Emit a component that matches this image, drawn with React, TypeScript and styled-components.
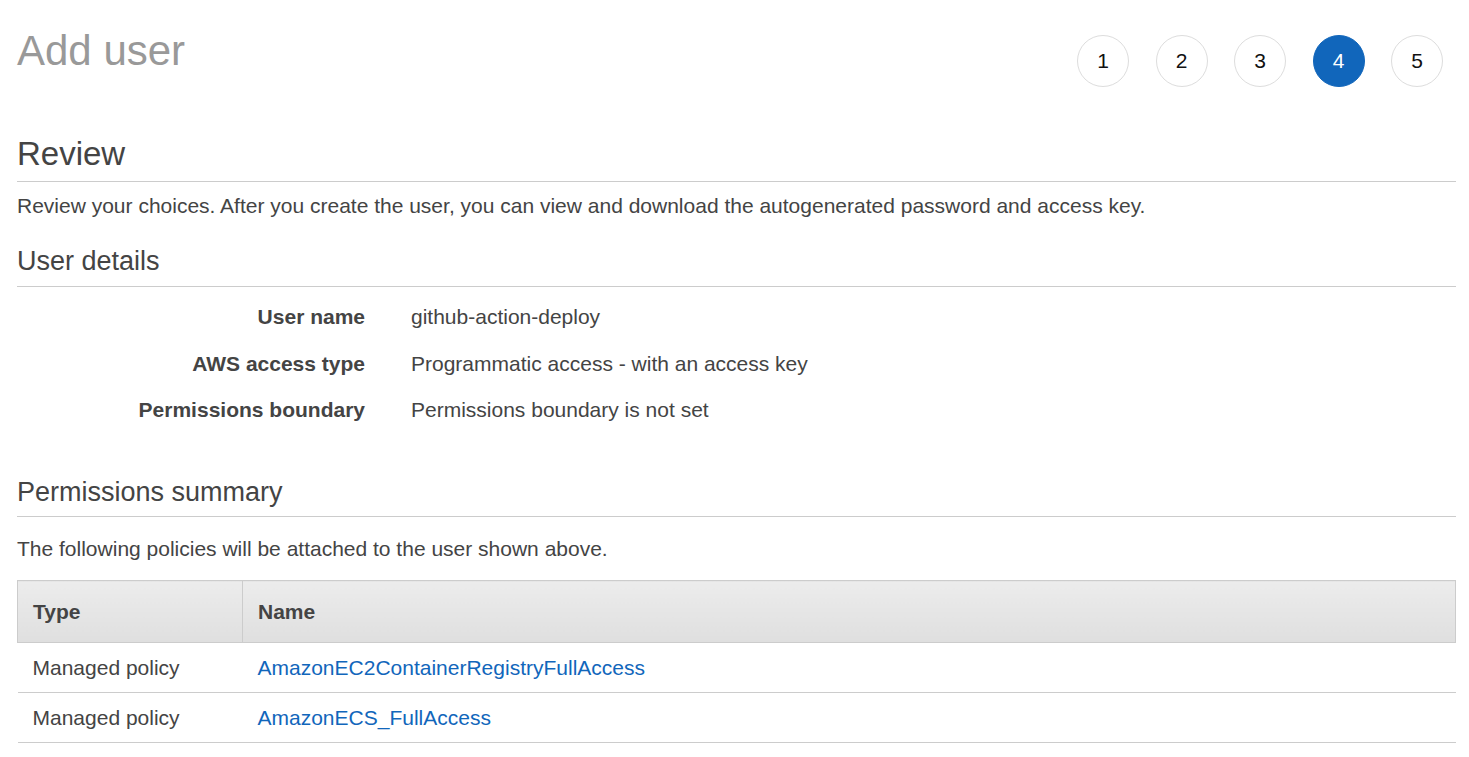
import React from "react";
import styled, { createGlobalStyle } from "styled-components";

const GlobalStyle = createGlobalStyle`
  html, body {
    margin: 0;
    padding: 0;
    background: #ffffff;
  }
  body {
    font-family: "Liberation Sans", Arial, sans-serif;
    color: #444444;
  }
  * { box-sizing: border-box; }
`;

const Page = styled.div`
  padding: 0 13px 0 17px;
`;

const Header = styled.header`
  display: flex;
  justify-content: space-between;
  align-items: flex-start;
`;

const Title = styled.h1`
  margin: 30px 0 0 0;
  font-size: 42px;
  line-height: 42px;
  font-weight: 400;
  color: #999999;
`;

const Steps = styled.ol`
  display: flex;
  gap: 26.5px;
  list-style: none;
  margin: 35px 13px 0 0;
  padding: 0;
`;

const Step = styled.li<{ $active?: boolean }>`
  width: 52px;
  height: 52px;
  border-radius: 50%;
  display: flex;
  align-items: center;
  justify-content: center;
  font-size: 21px;
  color: ${(p) => (p.$active ? "#ffffff" : "#111111")};
  background: ${(p) => (p.$active ? "#1166bb" : "#ffffff")};
  border: 1px solid ${(p) => (p.$active ? "#1166bb" : "#dddddd")};
`;

const SectionTitle = styled.h2<{ $size: number; $top: number; $pad: number }>`
  margin: ${(p) => p.$top}px 0 0 0;
  padding-bottom: ${(p) => p.$pad}px;
  font-size: ${(p) => p.$size}px;
  line-height: ${(p) => Math.round(p.$size * 1.22)}px;
  font-weight: 400;
  color: #444444;
  border-bottom: 1px solid #cccccc;
`;

const Text = styled.p<{ $top: number }>`
  margin: ${(p) => p.$top}px 0 0 0;
  font-size: 21px;
  line-height: 30px;
  color: #444444;
`;

const Details = styled.dl`
  display: grid;
  grid-template-columns: 348px 1fr;
  column-gap: 46px;
  row-gap: 16.5px;
  margin: 15px 0 0 0;
  font-size: 21px;
  line-height: 30px;
`;

const Label = styled.dt`
  text-align: right;
  font-weight: 700;
  color: #444444;
`;

const Value = styled.dd`
  margin: 0;
  color: #444444;
`;

const Table = styled.table`
  width: 100%;
  margin-top: 16px;
  border-collapse: collapse;
  font-size: 21px;
`;

const HeadCell = styled.th<{ $w?: number }>`
  text-align: left;
  font-weight: 700;
  color: #444444;
  height: 62px;
  padding: 0 15px;
  width: ${(p) => (p.$w ? `${p.$w}px` : "auto")};
  background: linear-gradient(#ececec, #dfdfdf);
  border: 1px solid #cccccc;
`;

const Row = styled.tr`
  border-bottom: 1px solid #cccccc;
`;

const Cell = styled.td`
  height: 50px;
  padding: 0 15px;
  color: #444444;
`;

const Link = styled.a`
  color: #1166bb;
  text-decoration: none;
`;

const policies = [
  "AmazonEC2ContainerRegistryFullAccess",
  "AmazonECS_FullAccess",
];

export default function App() {
  return (
    <>
      <GlobalStyle />
      <Page>
        <Header>
          <Title>Add user</Title>
          <Steps>
            {[1, 2, 3, 4, 5].map((n) => (
              <Step key={n} $active={n === 4}>
                {n}
              </Step>
            ))}
          </Steps>
        </Header>

        <SectionTitle $size={33} $top={47} $pad={7}>
          Review
        </SectionTitle>
        <Text $top={9}>
          Review your choices. After you create the user, you can view and
          download the autogenerated password and access key.
        </Text>

        <SectionTitle $size={27} $top={24} $pad={8}>
          User details
        </SectionTitle>
        <Details>
          <Label>User name</Label>
          <Value>github-action-deploy</Value>
          <Label>AWS access type</Label>
          <Value>Programmatic access - with an access key</Value>
          <Label>Permissions boundary</Label>
          <Value>Permissions boundary is not set</Value>
        </Details>

        <SectionTitle $size={27} $top={51} $pad={7}>
          Permissions summary
        </SectionTitle>
        <Text $top={17}>
          The following policies will be attached to the user shown above.
        </Text>

        <Table>
          <thead>
            <tr>
              <HeadCell $w={225}>Type</HeadCell>
              <HeadCell>Name</HeadCell>
            </tr>
          </thead>
          <tbody>
            {policies.map((p) => (
              <Row key={p}>
                <Cell>Managed policy</Cell>
                <Cell>
                  <Link href="#">{p}</Link>
                </Cell>
              </Row>
            ))}
          </tbody>
        </Table>
      </Page>
    </>
  );
}
